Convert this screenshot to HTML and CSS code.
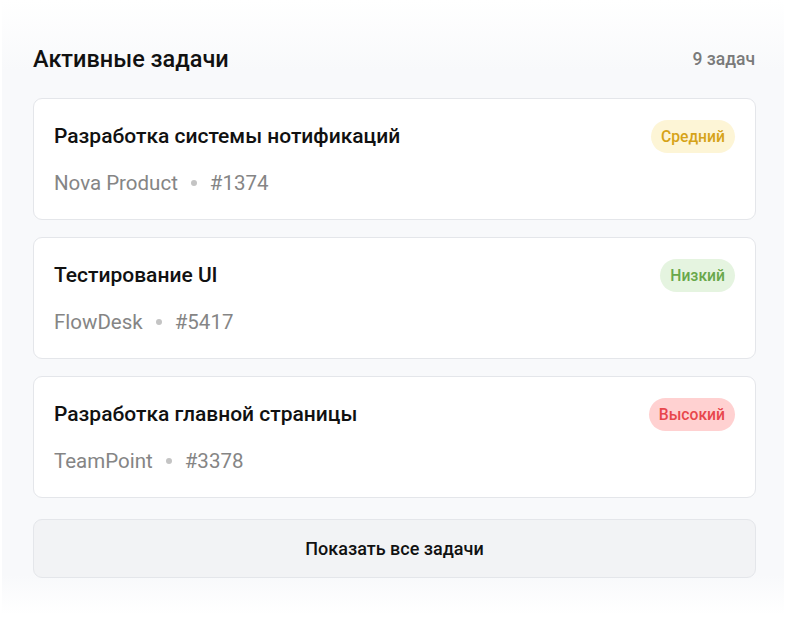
FILE: index.html
```html
<!DOCTYPE html>
<html>
  <head>
    <link rel="stylesheet" href="styles.css">
  </head>
  <body>
    <div class="panel">
      <div class="panel-head">
        <h2 class="panel-title">Активные задачи</h2>
        <span class="panel-count">9 задач</span>
      </div>

      <div class="task-list">
        <div class="task-card">
          <div class="task-top">
            <span class="task-name">Разработка системы нотификаций</span>
            <span class="badge badge-medium">Средний</span>
          </div>
          <div class="task-meta">
            <span>Nova Product</span>
            <span class="dot"></span>
            <span>#1374</span>
          </div>
        </div>

        <div class="task-card">
          <div class="task-top">
            <span class="task-name">Тестирование UI</span>
            <span class="badge badge-low">Низкий</span>
          </div>
          <div class="task-meta">
            <span>FlowDesk</span>
            <span class="dot"></span>
            <span>#5417</span>
          </div>
        </div>

        <div class="task-card">
          <div class="task-top">
            <span class="task-name">Разработка главной страницы</span>
            <span class="badge badge-high">Высокий</span>
          </div>
          <div class="task-meta">
            <span>TeamPoint</span>
            <span class="dot"></span>
            <span>#3378</span>
          </div>
        </div>
      </div>

      <button class="show-all">Показать все задачи</button>
    </div>
  </body>
</html>
```

FILE: styles.css
```css
body {
  margin: 0;
  background: #ffffff;
  font-family: Roboto, "Noto Sans", sans-serif;
}
.panel {
  margin: 0 2px;
  padding: 40px 28px 33px 31px;
  min-height: 540px;
  background: linear-gradient(to bottom, #ffffff 0px, #f8f9fb 70px, #f8f9fb 575px, #ffffff 615px);
}
.panel-head {
  display: flex;
  justify-content: space-between;
  align-items: center;
  height: 38px;
  margin-bottom: 20px;
}
.panel-title {
  margin: 0;
  font-size: 23.5px;
  font-weight: 500;
  color: #111111;
}
.panel-count {
  font-size: 17.5px;
  font-weight: 500;
  color: #7a7a7a;
  margin-right: 1px;
}
.task-list {
  display: flex;
  flex-direction: column;
  gap: 17px;
}
.task-card {
  background: #ffffff;
  border: 1px solid #e4e6ea;
  border-radius: 9px;
  padding: 20px 20px 23px 20px;
}
.task-top {
  display: flex;
  justify-content: space-between;
  align-items: center;
  height: 34px;
}
.task-name {
  font-size: 21px;
  font-weight: 500;
  color: #111111;
}
.badge {
  display: inline-flex;
  align-items: center;
  height: 33px;
  padding: 0 10px;
  border-radius: 17px;
  font-size: 15.7px;
  font-weight: 500;
}
.badge-medium {
  background: #fdf5d6;
  color: #d6a319;
}
.badge-low {
  background: #e5f4e0;
  color: #69a84b;
}
.badge-high {
  background: #ffd1d1;
  color: #e8474c;
}
.task-meta {
  display: flex;
  align-items: center;
  gap: 10px;
  margin-top: 17px;
  height: 26px;
  font-size: 20.5px;
  color: #858585;
}
.dot {
  width: 6px;
  height: 6px;
  border-radius: 50%;
  background: #c4c4c4;
  margin: 0 3px;
}
.show-all {
  display: block;
  width: 100%;
  margin-top: 21px;
  height: 59px;
  background: #f2f3f5;
  border: 1px solid #e4e6ea;
  border-radius: 9px;
  font-family: Roboto, "Noto Sans", sans-serif;
  font-size: 18px;
  font-weight: 500;
  color: #111111;
}
```
